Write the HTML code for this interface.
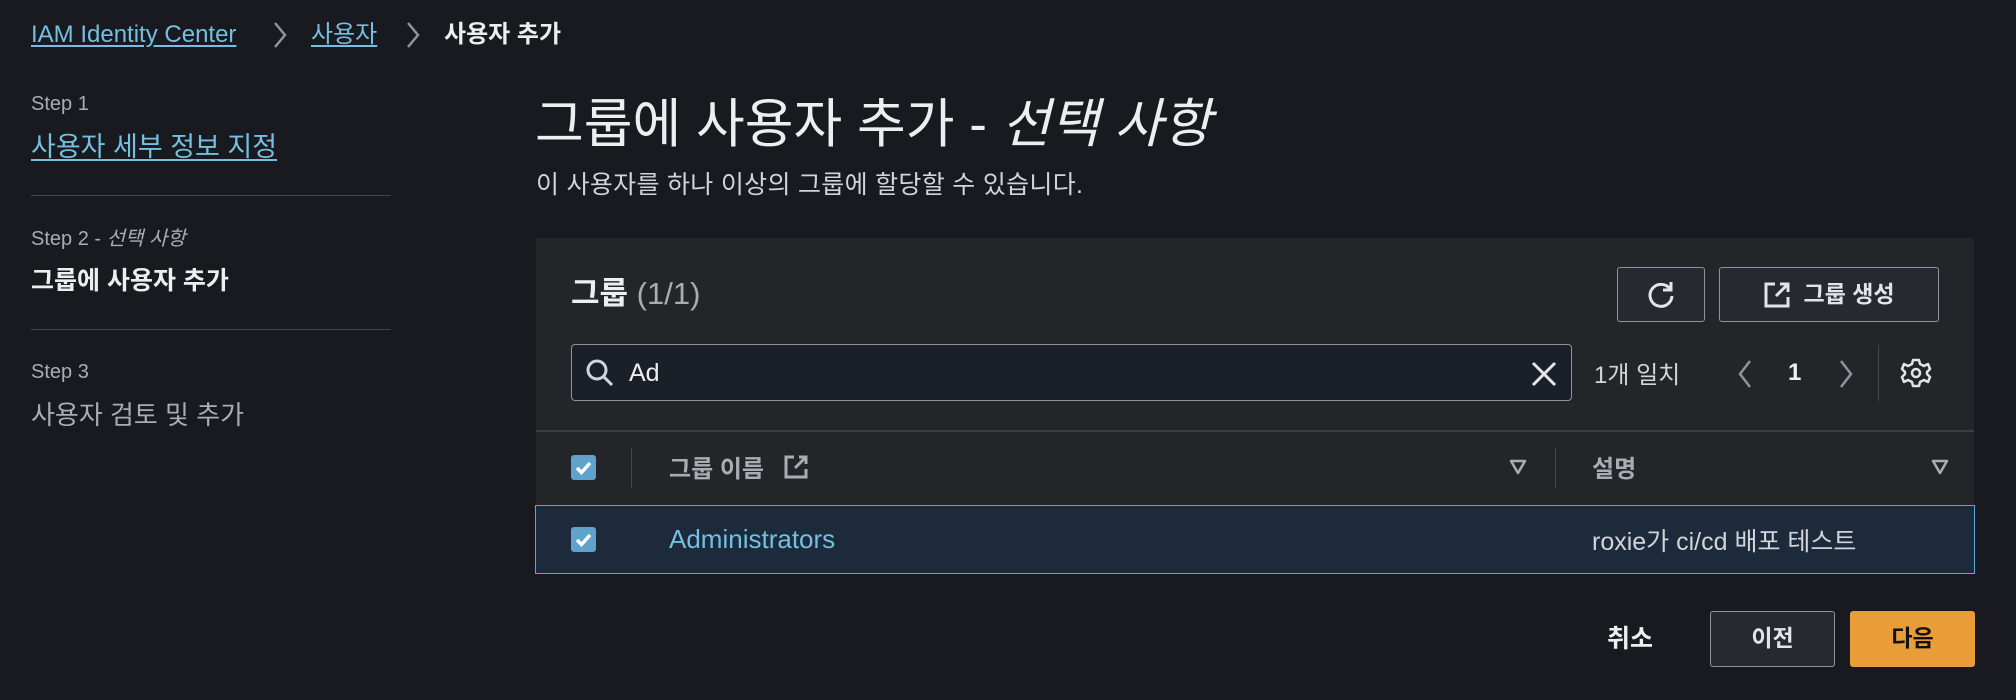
<!DOCTYPE html>
<html><head><meta charset="utf-8"><style>
*{box-sizing:border-box;margin:0;padding:0}
body{width:2016px;height:700px;background:#191a1f;font-family:"Liberation Sans","Noto Sans CJK KR",sans-serif;color:#d1d5db;position:relative;overflow:hidden}
.a{position:absolute;white-space:nowrap;line-height:1.2}
.link{color:#75bfe0;text-decoration:underline;text-underline-offset:3px}
.lbl{color:#a9adb3;font-size:20px}
.hr{position:absolute;height:1px;background:#414750}
.btn{position:absolute;border:1.5px solid #8d949c;border-radius:3px;background:#262a30;color:#e2e4e7;font-weight:bold;font-size:23px;display:flex;align-items:center;justify-content:center;line-height:1.2}
.cb{position:absolute;width:25px;height:25px;background:#5fa3cc;border-radius:3px}
</style></head><body>
<div class="a" style="left:31px;top:21px;font-size:24px"><span class="link">IAM Identity Center</span></div>
<svg class="a" style="left:272px;top:20px" width="16" height="30"><path d="M3 3 L13 15 L3 27" stroke="#8d949c" stroke-width="2.5" fill="none"/></svg>
<div class="a" style="left:311px;top:21px;font-size:24px"><span class="link">사용자</span></div>
<svg class="a" style="left:405px;top:20px" width="16" height="30"><path d="M3 3 L13 15 L3 27" stroke="#8d949c" stroke-width="2.5" fill="none"/></svg>
<div class="a" style="left:444px;top:21px;font-size:24px;font-weight:bold;color:#eceef0">사용자 추가</div>

<div class="a lbl" style="left:31px;top:92px">Step 1</div>
<div class="a" style="left:31px;top:131px;font-size:27px"><span class="link">사용자 세부 정보 지정</span></div>
<div class="hr" style="left:31px;top:195px;width:360px"></div>
<div class="a lbl" style="left:31px;top:227px">Step 2 - <i>선택 사항</i></div>
<div class="a" style="left:31px;top:266px;font-size:25px;font-weight:bold;color:#eceef0">그룹에 사용자 추가</div>
<div class="hr" style="left:31px;top:329px;width:360px"></div>
<div class="a lbl" style="left:31px;top:360px">Step 3</div>
<div class="a" style="left:31px;top:400px;font-size:26px;color:#a9adb3">사용자 검토 및 추가</div>

<div class="a" style="left:535px;top:93px;font-size:53px;color:#eceef0">그룹에 사용자 추가 - <i>선택 사항</i></div>
<div class="a" style="left:536px;top:170px;font-size:25px;letter-spacing:0.3px;color:#d1d5db">이 사용자를 하나 이상의 그룹에 할당할 수 있습니다.</div>

<div class="a" style="left:536px;top:238px;width:1438px;height:335px;background:#232529"></div>
<div class="a" style="left:571px;top:275px;font-size:31px;font-weight:bold;color:#eceef0">그룹 <span style="font-weight:normal;color:#a9adb3">(1/1)</span></div>
<div class="btn" style="left:1617px;top:267px;width:88px;height:55px"><svg width="32" height="32" viewBox="0 0 32 32"><path d="M25 10 A11 11 0 1 0 27 17" stroke="#e2e4e7" stroke-width="3" fill="none"/><path d="M26 3 V11 H18" stroke="#e2e4e7" stroke-width="3" fill="none"/></svg></div>
<div class="btn" style="left:1719px;top:267px;width:220px;height:55px"><svg width="28" height="28" viewBox="0 0 28 28" style="margin-right:12px"><path d="M12 3 H3 V25 H25 V16" stroke="#e2e4e7" stroke-width="3" fill="none"/><path d="M13 15 L25 3 M17 3 H25 V11" stroke="#e2e4e7" stroke-width="3" fill="none"/></svg>그룹 생성</div>

<div class="a" style="left:571px;top:344px;width:1001px;height:57px;background:#1b1f27;border:1.5px solid #8d949c;border-radius:4px"></div>
<svg class="a" style="left:585px;top:358px" width="30" height="30" viewBox="0 0 30 30"><circle cx="12" cy="12" r="9" stroke="#d1d5db" stroke-width="3" fill="none"/><path d="M18 18 L27 27" stroke="#d1d5db" stroke-width="3"/></svg>
<div class="a" style="left:629px;top:358px;font-size:25px;color:#eceef0">Ad</div>
<svg class="a" style="left:1530px;top:360px" width="28" height="28"><path d="M3 3 L25 25 M25 3 L3 25" stroke="#e2e4e7" stroke-width="3"/></svg>
<div class="a" style="left:1594px;top:362px;font-size:24px;color:#d1d5db">1개 일치</div>
<svg class="a" style="left:1736px;top:358px" width="18" height="32"><path d="M14 3 L4 16 L14 29" stroke="#8d949c" stroke-width="2.5" fill="none"/></svg>
<div class="a" style="left:1788px;top:359px;font-size:24px;font-weight:bold;color:#eceef0">1</div>
<svg class="a" style="left:1837px;top:358px" width="18" height="32"><path d="M4 3 L14 16 L4 29" stroke="#8d949c" stroke-width="2.5" fill="none"/></svg>
<div class="a" style="left:1878px;top:345px;width:1px;height:56px;background:#414750"></div>
<svg class="a" style="left:1900px;top:357px" width="32" height="32" viewBox="0 0 32 32"><path d="M13 3 H19 L20 7 L24 9 L28 7 L30 12 L27 15 V17 L30 20 L28 25 L24 23 L20 25 L19 29 H13 L12 25 L8 23 L4 25 L2 20 L5 17 V15 L2 12 L4 7 L8 9 L12 7 Z" stroke="#e2e4e7" stroke-width="2.5" fill="none" stroke-linejoin="round"/><circle cx="16" cy="16" r="4" stroke="#e2e4e7" stroke-width="2.5" fill="none"/></svg>

<div class="a" style="left:536px;top:430px;width:1438px;height:2px;background:#3a3e45"></div>
<div class="cb" style="left:571px;top:455px"><svg width="25" height="25"><path d="M6 13 L10.5 17.5 L19 8" stroke="#fff" stroke-width="3.5" fill="none"/></svg></div>
<div class="a" style="left:631px;top:448px;width:1px;height:40px;background:#414750"></div>
<div class="a" style="left:669px;top:456px;font-size:24px;font-weight:bold;color:#a9adb3">그룹 이름</div>
<svg class="a" style="left:783px;top:454px" width="26" height="26" viewBox="0 0 26 26"><path d="M11 3 H3 V23 H23 V15" stroke="#a9adb3" stroke-width="3" fill="none"/><path d="M12 14 L23 3 M16 3 H23 V10" stroke="#a9adb3" stroke-width="3" fill="none"/></svg>
<svg class="a" style="left:1509px;top:459px" width="18" height="16"><path d="M2 2 H16 L9 14 Z" stroke="#a9adb3" stroke-width="2.5" fill="none" stroke-linejoin="round"/></svg>
<div class="a" style="left:1555px;top:448px;width:1px;height:40px;background:#414750"></div>
<div class="a" style="left:1592px;top:456px;font-size:24px;font-weight:bold;color:#a9adb3">설명</div>
<svg class="a" style="left:1931px;top:459px" width="18" height="16"><path d="M2 2 H16 L9 14 Z" stroke="#a9adb3" stroke-width="2.5" fill="none" stroke-linejoin="round"/></svg>

<div class="a" style="left:535px;top:505px;width:1440px;height:69px;background:#1c2a3b;border:1.5px solid #5ba8d6"></div>
<div class="cb" style="left:571px;top:527px"><svg width="25" height="25"><path d="M6 13 L10.5 17.5 L19 8" stroke="#fff" stroke-width="3.5" fill="none"/></svg></div>
<div class="a" style="left:669px;top:524px;font-size:26px;color:#75bfe0">Administrators</div>
<div class="a" style="left:1592px;top:527px;font-size:25px;color:#d1d5db">roxie가 ci/cd 배포 테스트</div>

<div class="a" style="left:1607px;top:624px;font-size:25px;font-weight:bold;color:#eceef0">취소</div>
<div class="btn" style="left:1710px;top:611px;width:125px;height:56px">이전</div>
<div class="btn" style="left:1850px;top:611px;width:125px;height:56px;background:#e89d38;border-color:#e89d38;color:#111">다음</div>
</body></html>
